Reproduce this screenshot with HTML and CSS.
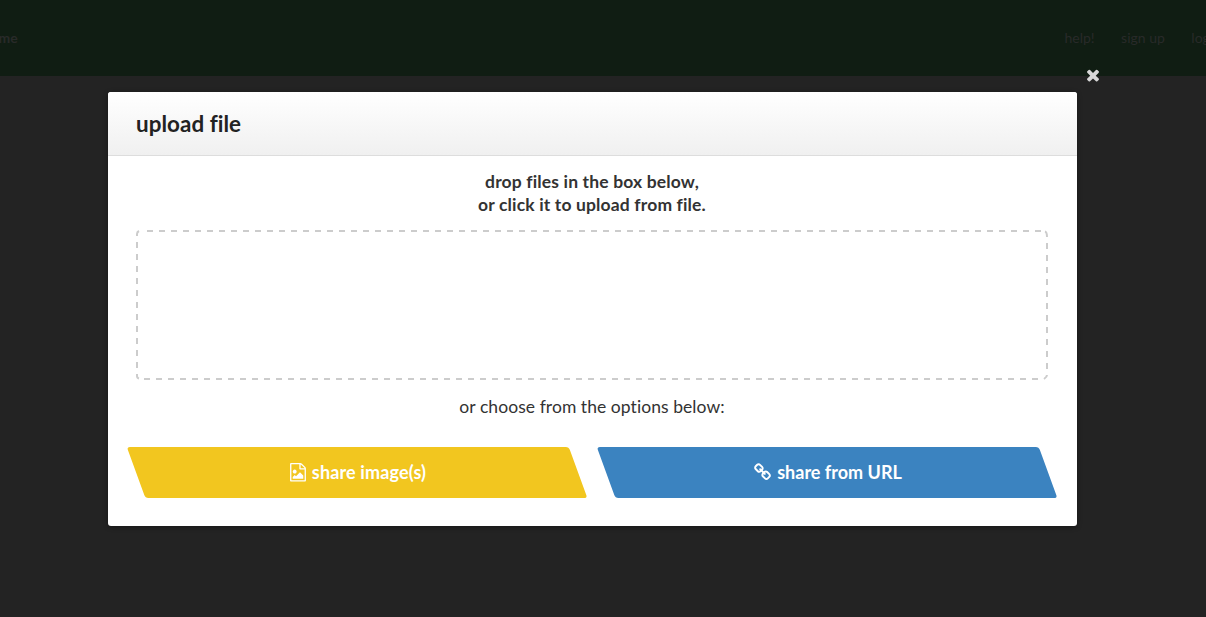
FILE: index.html
```html
<!DOCTYPE html>
<html lang="en">
<head>
<meta charset="utf-8">
<title>upload file</title>
<link rel="stylesheet" href="styles.css">
</head>
<body>
<header class="topbar">
  <a class="brand">home</a>
  <nav class="links"><a>help!</a><a>sign up</a><a>login</a></nav>
</header>
<div class="overlay">
  <section class="modal">
    <svg class="close" viewBox="0 0 1792 1792"><path d="M1490 1322q0 40-28 68l-136 136q-28 28-68 28t-68-28l-294-294-294 294q-28 28-68 28t-68-28l-136-136q-28-28-28-68t28-68l294-294-294-294q-28-28-28-68t28-68l136-136q28-28 68-28t68 28l294 294 294-294q28-28 68-28t68 28l136 136q28 28 28 68t-28 68l-294 294 294 294q28 28 28 68z"/></svg>
    <h1 class="title">upload file</h1>
    <div class="content">
      <p class="lead">drop files in the box below,<br>or click it to upload from file.</p>
      <svg class="dropzone" viewBox="0 0 912 150">
        <path class="dashes" d="M11 1H905M911 13V139M902 149H8M1 12V138"/>
        <path class="corners" d="M1 6V4Q1 2 3 1M909 1.5Q911 2 911 7M911 145Q911 147 908 149M1 144V146Q1 148 3 148.500"/>
      </svg>
      <p class="alt">or choose from the options below:</p>
      <div class="actions">
        <a class="button yellow"><span class="label"><svg class="icon-image" viewBox="0 0 1536 1792"><path d="M1468 380q28 28 48 76t20 88v1152q0 40-28 68t-68 28h-1344q-40 0-68-28t-28-68v-1600q0-40 28-68t68-28h896q40 0 88 20t76 48zm-444-244v376h376q-10-29-22-41l-313-313q-12-12-41-22zm384 1528v-1024h-416q-40 0-68-28t-28-68v-416h-768v1536h1280zm-128-448v320h-1024v-192l192-192 128 128 384-384zm-832-192q-80 0-136-56t-56-136 56-136 136-56 136 56 56 136-56 136-136 56z"/></svg><span>share image(s)</span></span></a>
        <a class="button blue"><span class="label"><svg class="icon-link" viewBox="64 0 1664 1792"><path d="M1520 1216q0-40-28-68l-208-208q-28-28-68-28-42 0-72 32 3 3 19 18.5t21.5 21.5 15 19 13 25.5 3.5 27.5q0 40-28 68t-68 28q-15 0-27.5-3.5t-25.5-13-19-15-21.5-21.5-18.5-19q-33 31-33 73 0 40 28 68l206 207q27 27 68 27 40 0 68-26l147-146q28-28 28-67zm-703-705q0-40-28-68l-206-207q-28-28-68-28-39 0-68 27l-147 146q-28 28-28 67 0 40 28 68l208 208q27 27 68 27 42 0 72-31-3-3-19-18.5t-21.5-21.5-15-19-13-25.5-3.5-27.5q0-40 28-68t68-28q15 0 27.5 3.5t25.5 13 19 15 21.5 21.5 18.5 19q33-31 33-73zm895 705q0 120-85 203l-147 146q-83 83-203 83-121 0-204-85l-206-207q-83-83-83-203 0-123 88-209l-88-88q-86 88-208 88-120 0-204-84l-208-208q-84-84-84-204t85-203l147-146q83-83 203-83 121 0 204 85l206 207q83 83 83 203 0 123-88 209l88 88q86-88 208-88 120 0 204 84l208 208q84 84 84 204z"/></svg><span>share from URL</span></span></a>
      </div>
    </div>
  </section>
</div>
</body>
</html>
```

FILE: styles.css
```css
* { box-sizing: border-box; }
body {
  margin: 0;
  height: 617px;
  overflow: hidden;
  background: #232323;
  font-family: Lato, sans-serif;
  font-variant-ligatures: none;
  color: #333;
}
.topbar {
  height: 76px;
  padding-bottom: 2px;
  display: flex;
  justify-content: space-between;
  align-items: center;
  background: #101d13;
  color: #282a29;
  font-size: 14px;
  overflow: hidden;
  white-space: nowrap;
}
.brand { margin-left: -17.5px; font-weight: 700; }
.links { display: flex; gap: 26.5px; margin-right: -15px; }
.overlay { padding: 16px 0 0 108px; }
.modal {
  position: relative;
  width: 969px;
  height: 434px;
  background: #fff;
  border-radius: 3px;
  box-shadow: 0 1px 5px rgba(0, 0, 0, .4);
}
.close {
  position: absolute;
  top: -26.5px;
  right: -24.5px;
  width: 18px;
  height: 18px;
  fill: #d8d8d8;
}
.title {
  margin: 0;
  height: 64px;
  padding: 0 28px;
  line-height: 63px;
  font-size: 22.4px;
  letter-spacing: .05px;
  font-weight: 700;
  color: #222;
  background: linear-gradient(#fff, #f0f0f0);
  border-bottom: 1px solid #ddd;
  border-radius: 3px 3px 0 0;
}
.content { padding: 14px 29px 0 28px; text-align: center; font-size: 17.5px; }
.lead { margin: 0 0 14px; line-height: 23px; font-weight: 700; letter-spacing: .15px; }
.dropzone { display: block; width: 912px; height: 150px; fill: none; stroke: #ccc; stroke-width: 2; }
.dashes { stroke-dasharray: 6 6; }
.alt { margin: 15px 0 29px; line-height: 23px; letter-spacing: .06px; }
.actions { display: grid; grid-template-columns: 1fr 1fr; gap: 28px; }
.button {
  height: 50.5px;
  border-radius: 3px;
  transform: skewX(20deg);
  color: #fff;
  font-size: 18px;
  font-weight: 700;
}
.yellow { background: #f2c61f; letter-spacing: .13px; }
.blue { background: #3b83c0; }
.label {
  height: 100%;
  display: flex;
  align-items: center;
  justify-content: center;
  gap: 6px;
  padding-left: 2px;
  transform: skewX(-20deg);
}
.label svg { height: 18.5px; fill: currentColor; }
.icon-image { width: 16px; }
.icon-link { width: 17px; }
```
